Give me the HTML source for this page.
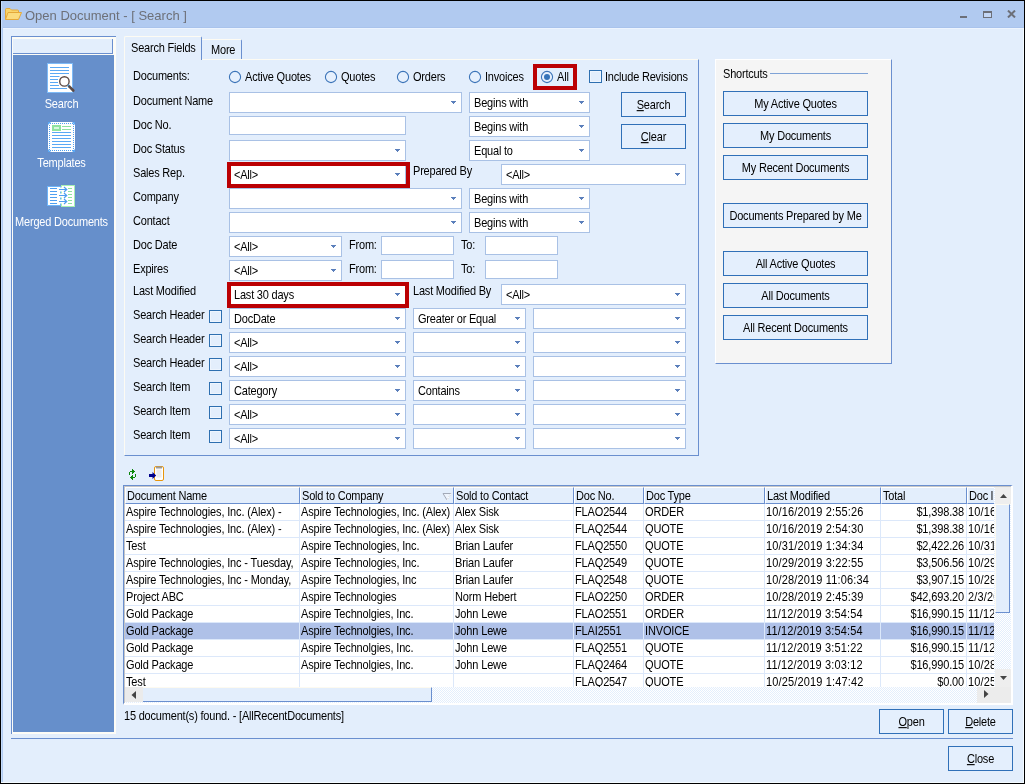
<!DOCTYPE html><html><head><meta charset="utf-8"><title>Open Document</title><style>
*{box-sizing:border-box;margin:0;padding:0}
html,body{width:1025px;height:784px;overflow:hidden}
body{background:#000;font-family:"Liberation Sans",sans-serif;font-size:11px;color:#000;position:relative;letter-spacing:-0.2px}
.g{letter-spacing:-0.15px}
.gd{letter-spacing:0.15px}
#root{position:absolute;left:0;top:0;width:1025px;height:784px;will-change:transform}
.a{position:absolute}
#win{left:1px;top:1px;width:1023px;height:782px;background:#e3eefc}
#title{left:1px;top:1px;width:1023px;height:27px;background:#b1caf0}
.t{position:absolute;white-space:nowrap;line-height:13px;height:13px;font-size:11px;transform:scaleY(1.12);transform-origin:0 10.3px}
.cb{position:absolute;height:21px;background:#fff;border:1px solid #a9c1e5}
.cb span{position:absolute;left:4px;top:4px;line-height:13px;height:13px;white-space:nowrap;transform:scaleY(1.12);transform-origin:0 10.3px}
.cb i{position:absolute;right:5px;top:8px;width:5px;height:1px;background:#5b7fbb}
.cb i:before{content:'';position:absolute;left:1px;top:1px;width:3px;height:1px;background:#5b7fbb}
.cb i:after{content:'';position:absolute;left:2px;top:2px;width:1px;height:1px;background:#5b7fbb}
.tx{position:absolute;height:19px;background:#fff;border:1px solid #a9c1e5}

.btn{position:absolute;border:1px solid #3070b8;background:#e4effd;text-align:center;white-space:nowrap}
.btn span{position:absolute;left:0;right:0;top:6px;line-height:13px;height:13px;text-align:center;transform:scaleY(1.12);transform-origin:50% 10.3px}
.ck{position:absolute;width:13px;height:13px;border:1px solid #2e6fb0;background:#e3eefc;box-shadow:inset 0 0 0 1px #eef5fe}
.rd{position:absolute;width:13px;height:13px;border:1px solid #3c74b8;border-radius:50%;background:#eef5fe}
.red{position:absolute;border:4px solid #bb0003}
u{text-decoration:underline}
</style></head><body><div id="root">
<div id="win" class="a"></div><div id="title" class="a"></div>
<div class="a" style="left:1px;top:1px;width:1px;height:782px;background:#c5dcfb"></div>
<div class="a" style="left:2px;top:28px;width:1px;height:754px;background:#b1caf0"></div>
<div class="a" style="left:1023px;top:28px;width:1px;height:755px;background:#f4fbff"></div>
<div class="a" style="left:1px;top:782px;width:1023px;height:1px;background:#f4fbff"></div>
<div class="a" style="left:3px;top:27px;width:1020px;height:1px;background:#a9c3ec"></div>
<div class="a" style="left:3px;top:28px;width:1020px;height:1px;background:#edf4fe"></div>
<svg class="a" style="left:4px;top:7px" width="19" height="14" viewBox="0 0 19 14">
<path d="M1.5 12.5 V2.5 Q1.5 1.5 2.5 1.5 H6 L7.5 3 H13.5 Q14.5 3 14.5 4 V5" fill="#f9d56b" stroke="#e5a93a" stroke-width="1"/>
<path d="M1.5 12.5 L4 5.5 H17.5 L14.5 12.5 Z" fill="#fbdc7e" stroke="#e5a93a" stroke-width="1" stroke-linejoin="round"/>
</svg>
<div class="t" style="left:25px;top:8px;font-size:13px;line-height:16px;height:16px;color:#6d7078;letter-spacing:0;transform:none">Open Document - [ Search ]</div>
<div class="a" style="left:960px;top:16px;width:7px;height:2px;background:#6c6f78"></div>
<div class="a" style="left:983px;top:11px;width:9px;height:7px;border:1px solid #6c6f78;border-top-width:2px;background:#c3d6f4"></div>
<svg class="a" style="left:1007px;top:10px" width="9" height="8" viewBox="0 0 9 8"><path d="M1 0.6 L8 7.4 M8 0.6 L1 7.4" stroke="#6c6f78" stroke-width="2.1"/></svg>
<div class="a" style="left:11px;top:36px;width:105px;height:698px;background:#fdfcf6;border-left:1px solid #6a8fcf;border-top:1px solid #6a8fcf"></div>
<div class="a" style="left:13px;top:39px;width:100px;height:15px;background:#e3eefc;border-right:1px solid #6a8fcf;border-bottom:1px solid #6a8fcf"></div>
<div class="a" style="left:13px;top:55px;width:101px;height:677px;background:#668fcb"></div>
<svg class="a" style="left:46px;top:62px" width="32" height="32" viewBox="0 0 32 32">
<rect x="1.5" y="1.5" width="25" height="29" fill="#fff" stroke="#7dbaf7" stroke-width="1"/>
<g stroke="#5aa9f5" stroke-width="1"><path d="M4 5.5H23M4 8.5H23M4 11.5H23M4 14.5H13.5M4 17.5H12M4 20.5H12M4 23.5H13M4 26.5H21"/></g>
<circle cx="18.4" cy="19.4" r="4.7" fill="#fff" stroke="#5d4b45" stroke-width="1.4"/>
<path d="M22 23.2 L23.6 24.8" stroke="#3b9be8" stroke-width="2.4"/>
<path d="M23.4 24.6 L27.3 28.5" stroke="#5d4b45" stroke-width="2.6" stroke-linecap="round"/>
</svg>
<div class="t" style="left:11px;top:98px;width:101px;text-align:center;color:#fff">Search</div>
<svg class="a" style="left:47px;top:121px" width="30" height="32" viewBox="0 0 30 32">
<rect x="1" y="1" width="27" height="30" fill="#fff"/>
<rect x="2.5" y="2.5" width="24" height="27" fill="none" stroke="#4f9ff0" stroke-width="1" stroke-dasharray="1 1" shape-rendering="crispEdges"/>
<rect x="5" y="4" width="9" height="6" fill="#8fe39f"/>
<rect x="7" y="6" width="5" height="2" fill="#d9f7de"/>
<path d="M15 5.5H24M15 8.5H24" stroke="#8fe39f"/>
<g stroke="#5aa9f5" stroke-width="1"><path d="M5 11.5H24M5 14.5H24M5 17.5H24M5 20.5H24M5 23.5H24M5 26.5H24"/></g>
<path d="M1 1H4L1 4Z M28 1V4L25 1Z M1 31V28L4 31Z M28 31H25L28 28Z" fill="#5aa9f5"/>
</svg>
<div class="t" style="left:11px;top:157px;width:101px;text-align:center;color:#fff">Templates</div>
<svg class="a" style="left:47px;top:184px" width="30" height="24" viewBox="0 0 30 24">
<rect x="0.5" y="2.5" width="13" height="19" fill="#fff" stroke="#6db3f8"/>
<rect x="14.5" y="1.5" width="13" height="21" fill="#fff" stroke="#a8f0b4"/>
<g stroke="#4f9ff0" stroke-width="1"><path d="M3 4.5H10M3 7.5H10M3 10.5H10M3 13.5H10M3 16.5H10M3 19.5H10"/></g>
<g stroke="#8fe39f" stroke-width="1"><path d="M21 4.5H25M21 7.5H25M21 10.5H25M21 13.5H25M21 16.5H25M21 19.5H25"/></g>
<rect x="12" y="3.5" width="4" height="4" fill="#fff"/><rect x="12" y="15.5" width="4" height="4" fill="#fff"/><rect x="12" y="9.5" width="4" height="4" fill="#fff"/>
<g stroke="#4f9ff0" stroke-width="1.2" fill="none"><path d="M12 5.5H19.5M17 3l2.7 2.5-2.7 2.5M12 11.5H19.5M17 9l2.7 2.5-2.7 2.5M12 17.5H19.5M17 15l2.7 2.5-2.7 2.5"/></g>
</svg>
<div class="t" style="left:11px;top:216px;width:101px;text-align:center;color:#fff">Merged Documents</div>
<div class="a" style="left:124px;top:59px;width:575px;height:397px;background:#e3eefc;border-left:1px solid #fdfbf3;border-top:1px solid #fdfbf3;border-right:1px solid #6a8fcf;border-bottom:1px solid #6a8fcf"></div>
<div class="a" style="left:124px;top:36px;width:78px;height:24px;background:#e3eefc;border-left:1px solid #fdfbf3;border-top:1px solid #fdfbf3;border-right:1px solid #6a8fcf;border-radius:2px 2px 0 0"></div>
<div class="a" style="left:202px;top:39px;width:40px;height:20px;background:#e3eefc;border-top:1px solid #fdfbf3;border-right:1px solid #6a8fcf;border-radius:0 2px 0 0"></div>
<div class="t" style="left:131px;top:42px;">Search Fields</div>
<div class="t" style="left:211px;top:44px;">More</div>
<div class="t" style="left:133px;top:70px;">Documents:</div>
<div class="t" style="left:133px;top:95px;">Document Name</div>
<div class="t" style="left:133px;top:119px;">Doc No.</div>
<div class="t" style="left:133px;top:143px;">Doc Status</div>
<div class="t" style="left:133px;top:167px;">Sales Rep.</div>
<div class="t" style="left:133px;top:191px;">Company</div>
<div class="t" style="left:133px;top:215px;">Contact</div>
<div class="t" style="left:133px;top:239px;">Doc Date</div>
<div class="t" style="left:133px;top:263px;">Expires</div>
<div class="t" style="left:133px;top:285px;">Last Modified</div>
<div class="t" style="left:133px;top:309px;">Search Header</div>
<div class="t" style="left:133px;top:333px;">Search Header</div>
<div class="t" style="left:133px;top:357px;">Search Header</div>
<div class="t" style="left:133px;top:381px;">Search Item</div>
<div class="t" style="left:133px;top:405px;">Search Item</div>
<div class="t" style="left:133px;top:429px;">Search Item</div>
<svg class="a" style="left:228px;top:70px" width="14" height="14" viewBox="0 0 14 14"><circle cx="7" cy="7" r="5.6" fill="#e6f0fd" stroke="#3c74b8" stroke-width="1.1"/></svg>
<div class="t" style="left:245px;top:71px;">Active Quotes</div>
<svg class="a" style="left:324px;top:70px" width="14" height="14" viewBox="0 0 14 14"><circle cx="7" cy="7" r="5.6" fill="#e6f0fd" stroke="#3c74b8" stroke-width="1.1"/></svg>
<div class="t" style="left:341px;top:71px;">Quotes</div>
<svg class="a" style="left:396px;top:70px" width="14" height="14" viewBox="0 0 14 14"><circle cx="7" cy="7" r="5.6" fill="#e6f0fd" stroke="#3c74b8" stroke-width="1.1"/></svg>
<div class="t" style="left:413px;top:71px;">Orders</div>
<svg class="a" style="left:468px;top:70px" width="14" height="14" viewBox="0 0 14 14"><circle cx="7" cy="7" r="5.6" fill="#e6f0fd" stroke="#3c74b8" stroke-width="1.1"/></svg>
<div class="t" style="left:485px;top:71px;">Invoices</div>
<svg class="a" style="left:540px;top:70px" width="14" height="14" viewBox="0 0 14 14"><circle cx="7" cy="7" r="5.6" fill="#e6f0fd" stroke="#3c74b8" stroke-width="1.1"/><circle cx="7" cy="7" r="3" fill="#3573b9"/></svg>
<div class="t" style="left:557px;top:71px;">All</div>
<div class="red" style="left:533px;top:64px;width:44px;height:26px"></div>
<div class="ck" style="left:589px;top:70px"></div>
<div class="t" style="left:605px;top:71px;">Include Revisions</div>
<div class="cb" style="left:229px;top:92px;width:233px"><span></span><i></i></div>
<div class="cb" style="left:469px;top:92px;width:121px"><span>Begins with</span><i></i></div>
<div class="tx" style="left:229px;top:116px;width:177px;height:19px"></div>
<div class="cb" style="left:469px;top:116px;width:121px"><span>Begins with</span><i></i></div>
<div class="cb" style="left:229px;top:140px;width:177px"><span></span><i></i></div>
<div class="cb" style="left:469px;top:140px;width:121px"><span>Equal to</span><i></i></div>
<div class="cb" style="left:229px;top:164px;width:177px"><span>&lt;All&gt;</span><i></i></div>
<div class="red" style="left:227px;top:162px;width:183px;height:26px"></div>
<div class="t" style="left:413px;top:165px;">Prepared By</div>
<div class="cb" style="left:501px;top:164px;width:185px"><span>&lt;All&gt;</span><i></i></div>
<div class="cb" style="left:229px;top:188px;width:233px"><span></span><i></i></div>
<div class="cb" style="left:469px;top:188px;width:121px"><span>Begins with</span><i></i></div>
<div class="cb" style="left:229px;top:212px;width:233px"><span></span><i></i></div>
<div class="cb" style="left:469px;top:212px;width:121px"><span>Begins with</span><i></i></div>
<div class="cb" style="left:229px;top:236px;width:113px"><span>&lt;All&gt;</span><i></i></div>
<div class="t" style="left:349px;top:239px;">From:</div>
<div class="tx" style="left:381px;top:236px;width:73px;height:19px"></div>
<div class="t" style="left:461px;top:239px;">To:</div>
<div class="tx" style="left:485px;top:236px;width:73px;height:19px"></div>
<div class="cb" style="left:229px;top:260px;width:113px"><span>&lt;All&gt;</span><i></i></div>
<div class="t" style="left:349px;top:263px;">From:</div>
<div class="tx" style="left:381px;top:260px;width:73px;height:19px"></div>
<div class="t" style="left:461px;top:263px;">To:</div>
<div class="tx" style="left:485px;top:260px;width:73px;height:19px"></div>
<div class="cb" style="left:229px;top:284px;width:177px"><span>Last 30 days</span><i></i></div>
<div class="red" style="left:227px;top:282px;width:182px;height:26px"></div>
<div class="t" style="left:413px;top:285px;">Last Modified By</div>
<div class="cb" style="left:501px;top:284px;width:185px"><span>&lt;All&gt;</span><i></i></div>
<div class="ck" style="left:209px;top:310px"></div>
<div class="cb" style="left:229px;top:308px;width:177px"><span>DocDate</span><i></i></div>
<div class="cb" style="left:413px;top:308px;width:113px"><span>Greater or Equal</span><i></i></div>
<div class="cb" style="left:533px;top:308px;width:153px"><span></span><i></i></div>
<div class="ck" style="left:209px;top:334px"></div>
<div class="cb" style="left:229px;top:332px;width:177px"><span>&lt;All&gt;</span><i></i></div>
<div class="cb" style="left:413px;top:332px;width:113px"><span></span><i></i></div>
<div class="cb" style="left:533px;top:332px;width:153px"><span></span><i></i></div>
<div class="ck" style="left:209px;top:358px"></div>
<div class="cb" style="left:229px;top:356px;width:177px"><span>&lt;All&gt;</span><i></i></div>
<div class="cb" style="left:413px;top:356px;width:113px"><span></span><i></i></div>
<div class="cb" style="left:533px;top:356px;width:153px"><span></span><i></i></div>
<div class="ck" style="left:209px;top:382px"></div>
<div class="cb" style="left:229px;top:380px;width:177px"><span>Category</span><i></i></div>
<div class="cb" style="left:413px;top:380px;width:113px"><span>Contains</span><i></i></div>
<div class="cb" style="left:533px;top:380px;width:153px"><span></span><i></i></div>
<div class="ck" style="left:209px;top:406px"></div>
<div class="cb" style="left:229px;top:404px;width:177px"><span>&lt;All&gt;</span><i></i></div>
<div class="cb" style="left:413px;top:404px;width:113px"><span></span><i></i></div>
<div class="cb" style="left:533px;top:404px;width:153px"><span></span><i></i></div>
<div class="ck" style="left:209px;top:430px"></div>
<div class="cb" style="left:229px;top:428px;width:177px"><span>&lt;All&gt;</span><i></i></div>
<div class="cb" style="left:413px;top:428px;width:113px"><span></span><i></i></div>
<div class="cb" style="left:533px;top:428px;width:153px"><span></span><i></i></div>
<div class="btn" style="left:621px;top:92px;width:65px;height:25px"><span><u>S</u>earch</span></div>
<div class="btn" style="left:621px;top:124px;width:65px;height:25px"><span><u>C</u>lear</span></div>
<div class="a" style="left:715px;top:59px;width:177px;height:305px;background:#f5f5f5;border-left:1px solid #fff;border-top:1px solid #fff;border-right:1px solid #6a8fcf;border-bottom:1px solid #6a8fcf"></div>
<div class="t" style="left:723px;top:68px;">Shortcuts</div>
<div class="a" style="left:770px;top:73px;width:98px;height:1px;background:#7fa3d6"></div>
<div class="btn" style="left:723px;top:91px;width:145px;height:25px"><span>My Active Quotes</span></div>
<div class="btn" style="left:723px;top:123px;width:145px;height:25px"><span>My Documents</span></div>
<div class="btn" style="left:723px;top:155px;width:145px;height:25px"><span>My Recent Documents</span></div>
<div class="btn" style="left:723px;top:203px;width:145px;height:25px"><span>Documents Prepared by Me</span></div>
<div class="btn" style="left:723px;top:251px;width:145px;height:25px"><span>All Active Quotes</span></div>
<div class="btn" style="left:723px;top:283px;width:145px;height:25px"><span>All Documents</span></div>
<div class="btn" style="left:723px;top:315px;width:145px;height:25px"><span>All Recent Documents</span></div>
<svg class="a" style="left:128px;top:468px" width="10" height="14" viewBox="0 0 10 14" shape-rendering="crispEdges" fill="#0b860b"><rect x="4" y="1" width="1" height="1"/><rect x="4" y="2" width="1" height="1"/><rect x="5" y="2" width="1" height="1"/><rect x="2" y="3" width="1" height="1"/><rect x="3" y="3" width="1" height="1"/><rect x="4" y="3" width="1" height="1"/><rect x="5" y="3" width="1" height="1"/><rect x="6" y="3" width="1" height="1"/><rect x="1" y="4" width="1" height="1"/><rect x="4" y="4" width="1" height="1"/><rect x="5" y="4" width="1" height="1"/><rect x="1" y="5" width="1" height="1"/><rect x="4" y="5" width="1" height="1"/><rect x="1" y="6" width="1" height="1"/><rect x="7" y="6" width="1" height="1"/><rect x="4" y="7" width="1" height="1"/><rect x="7" y="7" width="1" height="1"/><rect x="3" y="8" width="1" height="1"/><rect x="4" y="8" width="1" height="1"/><rect x="7" y="8" width="1" height="1"/><rect x="2" y="9" width="1" height="1"/><rect x="3" y="9" width="1" height="1"/><rect x="4" y="9" width="1" height="1"/><rect x="5" y="9" width="1" height="1"/><rect x="6" y="9" width="1" height="1"/><rect x="3" y="10" width="1" height="1"/><rect x="4" y="10" width="1" height="1"/><rect x="4" y="11" width="1" height="1"/></svg>
<svg class="a" style="left:148px;top:465px" width="18" height="17" viewBox="0 0 18 17">
<rect x="6.5" y="1.5" width="9" height="14" rx="1.5" fill="#fff" stroke="#e8960c" stroke-width="1"/>
<rect x="8.5" y="4.5" width="5" height="8" fill="#ececec"/>
<rect x="8" y="1.5" width="6" height="2" fill="#9a9a9a"/>
<path d="M1 9 H4.5 V7 L8.2 10.5 L4.5 14 V12 H1 Z" fill="#00008a"/>
</svg>
<div class="a" style="left:123px;top:485px;width:890px;height:220px;border-left:1px solid #6a8fcf;border-top:1px solid #6a8fcf;border-right:2px solid #fff;border-bottom:2px solid #fff;background:#fff"></div>
<div class="a" style="left:124px;top:486px;width:887px;height:217px;border-left:1px solid #c6c6c6;border-top:1px solid #c6c6c6;background:#fff"></div>
<div class="a" style="left:125px;top:487px;width:175px;height:17px;background:#e3eefc;border-left:1px solid #fff;border-top:1px solid #fff;border-right:1px solid #6a8fcf;border-bottom:1px solid #6a8fcf"></div>
<div class="t" style="left:127px;top:490px;width:171px;overflow:hidden">Document Name</div>
<div class="a" style="left:300px;top:487px;width:154px;height:17px;background:#e3eefc;border-left:1px solid #fff;border-top:1px solid #fff;border-right:1px solid #6a8fcf;border-bottom:1px solid #6a8fcf"></div>
<div class="t" style="left:302px;top:490px;width:150px;overflow:hidden">Sold to Company</div>
<div class="a" style="left:454px;top:487px;width:120px;height:17px;background:#e3eefc;border-left:1px solid #fff;border-top:1px solid #fff;border-right:1px solid #6a8fcf;border-bottom:1px solid #6a8fcf"></div>
<div class="t" style="left:456px;top:490px;width:116px;overflow:hidden">Sold to Contact</div>
<div class="a" style="left:574px;top:487px;width:70px;height:17px;background:#e3eefc;border-left:1px solid #fff;border-top:1px solid #fff;border-right:1px solid #6a8fcf;border-bottom:1px solid #6a8fcf"></div>
<div class="t" style="left:576px;top:490px;width:66px;overflow:hidden">Doc No.</div>
<div class="a" style="left:644px;top:487px;width:121px;height:17px;background:#e3eefc;border-left:1px solid #fff;border-top:1px solid #fff;border-right:1px solid #6a8fcf;border-bottom:1px solid #6a8fcf"></div>
<div class="t" style="left:646px;top:490px;width:117px;overflow:hidden">Doc Type</div>
<div class="a" style="left:765px;top:487px;width:116px;height:17px;background:#e3eefc;border-left:1px solid #fff;border-top:1px solid #fff;border-right:1px solid #6a8fcf;border-bottom:1px solid #6a8fcf"></div>
<div class="t" style="left:767px;top:490px;width:112px;overflow:hidden">Last Modified</div>
<div class="a" style="left:881px;top:487px;width:86px;height:17px;background:#e3eefc;border-left:1px solid #fff;border-top:1px solid #fff;border-right:1px solid #6a8fcf;border-bottom:1px solid #6a8fcf"></div>
<div class="t" style="left:883px;top:490px;width:82px;overflow:hidden">Total</div>
<div class="a" style="left:967px;top:487px;width:28px;height:17px;background:#e3eefc;border-left:1px solid #fff;border-top:1px solid #fff;border-bottom:1px solid #6a8fcf"></div>
<div class="t" style="left:969px;top:490px;width:24px;overflow:hidden">Doc l</div>
<svg class="a" style="left:442px;top:492px" width="10" height="9" viewBox="0 0 10 9"><path d="M1 1.5 H9 L5 8 Z" fill="#eef4fd" stroke="#a3aab8" stroke-width="1"/><path d="M9 1.5 L5 8" stroke="#fff" stroke-width="1"/></svg>
<div class="a" style="left:125px;top:504px;width:870px;height:17px;background:#fff;border-bottom:1px solid #dce8fa"></div>
<div class="t g" style="left:126px;top:506px;width:173px;overflow:hidden;">Aspire Technologies, Inc. (Alex) -</div>
<div class="t g" style="left:301px;top:506px;width:152px;overflow:hidden;">Aspire Technologies, Inc. (Alex)</div>
<div class="t g" style="left:455px;top:506px;width:118px;overflow:hidden;">Alex Sisk</div>
<div class="t g" style="left:575px;top:506px;width:68px;overflow:hidden;">FLAO2544</div>
<div class="t g" style="left:645px;top:506px;width:119px;overflow:hidden;">ORDER</div>
<div class="t gd" style="left:766px;top:506px;width:114px;overflow:hidden;">10/16/2019 2:55:26</div>
<div class="t g" style="left:882px;top:506px;width:82px;overflow:hidden;text-align:right;">$1,398.38</div>
<div class="t gd" style="left:968px;top:506px;width:26px;overflow:hidden;">10/16/2019</div>
<div class="a" style="left:125px;top:521px;width:870px;height:17px;background:#fff;border-bottom:1px solid #dce8fa"></div>
<div class="t g" style="left:126px;top:523px;width:173px;overflow:hidden;">Aspire Technologies, Inc. (Alex) -</div>
<div class="t g" style="left:301px;top:523px;width:152px;overflow:hidden;">Aspire Technologies, Inc. (Alex)</div>
<div class="t g" style="left:455px;top:523px;width:118px;overflow:hidden;">Alex Sisk</div>
<div class="t g" style="left:575px;top:523px;width:68px;overflow:hidden;">FLAQ2544</div>
<div class="t g" style="left:645px;top:523px;width:119px;overflow:hidden;">QUOTE</div>
<div class="t gd" style="left:766px;top:523px;width:114px;overflow:hidden;">10/16/2019 2:54:30</div>
<div class="t g" style="left:882px;top:523px;width:82px;overflow:hidden;text-align:right;">$1,398.38</div>
<div class="t gd" style="left:968px;top:523px;width:26px;overflow:hidden;">10/16/2019</div>
<div class="a" style="left:125px;top:538px;width:870px;height:17px;background:#fff;border-bottom:1px solid #dce8fa"></div>
<div class="t g" style="left:126px;top:540px;width:173px;overflow:hidden;">Test</div>
<div class="t g" style="left:301px;top:540px;width:152px;overflow:hidden;">Aspire Technologies, Inc.</div>
<div class="t g" style="left:455px;top:540px;width:118px;overflow:hidden;">Brian Laufer</div>
<div class="t g" style="left:575px;top:540px;width:68px;overflow:hidden;">FLAQ2550</div>
<div class="t g" style="left:645px;top:540px;width:119px;overflow:hidden;">QUOTE</div>
<div class="t gd" style="left:766px;top:540px;width:114px;overflow:hidden;">10/31/2019 1:34:34</div>
<div class="t g" style="left:882px;top:540px;width:82px;overflow:hidden;text-align:right;">$2,422.26</div>
<div class="t gd" style="left:968px;top:540px;width:26px;overflow:hidden;">10/31/2019</div>
<div class="a" style="left:125px;top:555px;width:870px;height:17px;background:#fff;border-bottom:1px solid #dce8fa"></div>
<div class="t g" style="left:126px;top:557px;width:173px;overflow:hidden;">Aspire Technologies, Inc - Tuesday,</div>
<div class="t g" style="left:301px;top:557px;width:152px;overflow:hidden;">Aspire Technologies, Inc.</div>
<div class="t g" style="left:455px;top:557px;width:118px;overflow:hidden;">Brian Laufer</div>
<div class="t g" style="left:575px;top:557px;width:68px;overflow:hidden;">FLAQ2549</div>
<div class="t g" style="left:645px;top:557px;width:119px;overflow:hidden;">QUOTE</div>
<div class="t gd" style="left:766px;top:557px;width:114px;overflow:hidden;">10/29/2019 3:22:55</div>
<div class="t g" style="left:882px;top:557px;width:82px;overflow:hidden;text-align:right;">$3,506.56</div>
<div class="t gd" style="left:968px;top:557px;width:26px;overflow:hidden;">10/29/2019</div>
<div class="a" style="left:125px;top:572px;width:870px;height:17px;background:#fff;border-bottom:1px solid #dce8fa"></div>
<div class="t g" style="left:126px;top:574px;width:173px;overflow:hidden;">Aspire Technologies, Inc - Monday,</div>
<div class="t g" style="left:301px;top:574px;width:152px;overflow:hidden;">Aspire Technologies, Inc</div>
<div class="t g" style="left:455px;top:574px;width:118px;overflow:hidden;">Brian Laufer</div>
<div class="t g" style="left:575px;top:574px;width:68px;overflow:hidden;">FLAQ2548</div>
<div class="t g" style="left:645px;top:574px;width:119px;overflow:hidden;">QUOTE</div>
<div class="t gd" style="left:766px;top:574px;width:114px;overflow:hidden;">10/28/2019 11:06:34</div>
<div class="t g" style="left:882px;top:574px;width:82px;overflow:hidden;text-align:right;">$3,907.15</div>
<div class="t gd" style="left:968px;top:574px;width:26px;overflow:hidden;">10/28/2019</div>
<div class="a" style="left:125px;top:589px;width:870px;height:17px;background:#fff;border-bottom:1px solid #dce8fa"></div>
<div class="t g" style="left:126px;top:591px;width:173px;overflow:hidden;">Project ABC</div>
<div class="t g" style="left:301px;top:591px;width:152px;overflow:hidden;">Aspire Technologies</div>
<div class="t g" style="left:455px;top:591px;width:118px;overflow:hidden;">Norm Hebert</div>
<div class="t g" style="left:575px;top:591px;width:68px;overflow:hidden;">FLAO2250</div>
<div class="t g" style="left:645px;top:591px;width:119px;overflow:hidden;">ORDER</div>
<div class="t gd" style="left:766px;top:591px;width:114px;overflow:hidden;">10/28/2019 2:45:39</div>
<div class="t g" style="left:882px;top:591px;width:82px;overflow:hidden;text-align:right;">$42,693.20</div>
<div class="t gd" style="left:968px;top:591px;width:26px;overflow:hidden;">2/3/2019</div>
<div class="a" style="left:125px;top:606px;width:870px;height:17px;background:#fff;border-bottom:1px solid #dce8fa"></div>
<div class="t g" style="left:126px;top:608px;width:173px;overflow:hidden;">Gold Package</div>
<div class="t g" style="left:301px;top:608px;width:152px;overflow:hidden;">Aspire Technolgies, Inc.</div>
<div class="t g" style="left:455px;top:608px;width:118px;overflow:hidden;">John Lewe</div>
<div class="t g" style="left:575px;top:608px;width:68px;overflow:hidden;">FLAO2551</div>
<div class="t g" style="left:645px;top:608px;width:119px;overflow:hidden;">ORDER</div>
<div class="t gd" style="left:766px;top:608px;width:114px;overflow:hidden;">11/12/2019 3:54:54</div>
<div class="t g" style="left:882px;top:608px;width:82px;overflow:hidden;text-align:right;">$16,990.15</div>
<div class="t gd" style="left:968px;top:608px;width:26px;overflow:hidden;">11/12/2019</div>
<div class="a" style="left:125px;top:623px;width:870px;height:17px;background:#afc1e8;border-bottom:1px solid #dce8fa"></div>
<div class="t g" style="left:126px;top:625px;width:173px;overflow:hidden;">Gold Package</div>
<div class="t g" style="left:301px;top:625px;width:152px;overflow:hidden;">Aspire Technolgies, Inc.</div>
<div class="t g" style="left:455px;top:625px;width:118px;overflow:hidden;">John Lewe</div>
<div class="t g" style="left:575px;top:625px;width:68px;overflow:hidden;">FLAI2551</div>
<div class="t g" style="left:645px;top:625px;width:119px;overflow:hidden;">INVOICE</div>
<div class="t gd" style="left:766px;top:625px;width:114px;overflow:hidden;">11/12/2019 3:54:54</div>
<div class="t g" style="left:882px;top:625px;width:82px;overflow:hidden;text-align:right;">$16,990.15</div>
<div class="t gd" style="left:968px;top:625px;width:26px;overflow:hidden;">11/12/2019</div>
<div class="a" style="left:125px;top:640px;width:870px;height:17px;background:#fff;border-bottom:1px solid #dce8fa"></div>
<div class="t g" style="left:126px;top:642px;width:173px;overflow:hidden;">Gold Package</div>
<div class="t g" style="left:301px;top:642px;width:152px;overflow:hidden;">Aspire Technolgies, Inc.</div>
<div class="t g" style="left:455px;top:642px;width:118px;overflow:hidden;">John Lewe</div>
<div class="t g" style="left:575px;top:642px;width:68px;overflow:hidden;">FLAQ2551</div>
<div class="t g" style="left:645px;top:642px;width:119px;overflow:hidden;">QUOTE</div>
<div class="t gd" style="left:766px;top:642px;width:114px;overflow:hidden;">11/12/2019 3:51:22</div>
<div class="t g" style="left:882px;top:642px;width:82px;overflow:hidden;text-align:right;">$16,990.15</div>
<div class="t gd" style="left:968px;top:642px;width:26px;overflow:hidden;">11/12/2019</div>
<div class="a" style="left:125px;top:657px;width:870px;height:17px;background:#fff;border-bottom:1px solid #dce8fa"></div>
<div class="t g" style="left:126px;top:659px;width:173px;overflow:hidden;">Gold Package</div>
<div class="t g" style="left:301px;top:659px;width:152px;overflow:hidden;">Aspire Technolgies, Inc.</div>
<div class="t g" style="left:455px;top:659px;width:118px;overflow:hidden;">John Lewe</div>
<div class="t g" style="left:575px;top:659px;width:68px;overflow:hidden;">FLAQ2464</div>
<div class="t g" style="left:645px;top:659px;width:119px;overflow:hidden;">QUOTE</div>
<div class="t gd" style="left:766px;top:659px;width:114px;overflow:hidden;">11/12/2019 3:03:12</div>
<div class="t g" style="left:882px;top:659px;width:82px;overflow:hidden;text-align:right;">$16,990.15</div>
<div class="t gd" style="left:968px;top:659px;width:26px;overflow:hidden;">10/28/2019</div>
<div class="a" style="left:125px;top:674px;width:870px;height:13px;background:#fff;"></div>
<div class="t g" style="left:126px;top:676px;width:173px;overflow:hidden;">Test</div>
<div class="t g" style="left:301px;top:676px;width:152px;overflow:hidden;"></div>
<div class="t g" style="left:455px;top:676px;width:118px;overflow:hidden;"></div>
<div class="t g" style="left:575px;top:676px;width:68px;overflow:hidden;">FLAQ2547</div>
<div class="t g" style="left:645px;top:676px;width:119px;overflow:hidden;">QUOTE</div>
<div class="t gd" style="left:766px;top:676px;width:114px;overflow:hidden;">10/25/2019 1:47:42</div>
<div class="t g" style="left:882px;top:676px;width:82px;overflow:hidden;text-align:right;">$0.00</div>
<div class="t gd" style="left:968px;top:676px;width:26px;overflow:hidden;">10/25/2019</div>
<div class="a" style="left:299px;top:504px;width:1px;height:183px;background:#dce8fa"></div>
<div class="a" style="left:453px;top:504px;width:1px;height:183px;background:#dce8fa"></div>
<div class="a" style="left:573px;top:504px;width:1px;height:183px;background:#dce8fa"></div>
<div class="a" style="left:643px;top:504px;width:1px;height:183px;background:#dce8fa"></div>
<div class="a" style="left:764px;top:504px;width:1px;height:183px;background:#dce8fa"></div>
<div class="a" style="left:880px;top:504px;width:1px;height:183px;background:#dce8fa"></div>
<div class="a" style="left:966px;top:504px;width:1px;height:183px;background:#dce8fa"></div>
<div class="a" style="left:994px;top:487px;width:17px;height:200px;background:repeating-conic-gradient(#fff 0% 25%, #e3eefc 0% 50%) 0 0/2px 2px"></div>
<div class="a" style="left:995px;top:487px;width:16px;height:17px;background:#eeeeee"></div>
<svg class="a" style="left:1000px;top:494px" width="7" height="4" viewBox="0 0 7 4"><path d="M0 4 L3.5 0 L7 4Z" fill="#444"/></svg>
<div class="a" style="left:995px;top:504px;width:15px;height:109px;background:#e3eefc;border-right:1px solid #6a8fcf;border-bottom:1px solid #6a8fcf;border-left:1px solid #fdfaf0;border-top:1px solid #fdfaf0"></div>
<div class="a" style="left:995px;top:669px;width:16px;height:18px;background:#eeeeee"></div>
<svg class="a" style="left:1000px;top:676px" width="7" height="4" viewBox="0 0 7 4"><path d="M0 0 L7 0 L3.5 4Z" fill="#444"/></svg>
<div class="a" style="left:125px;top:687px;width:886px;height:16px;background:repeating-conic-gradient(#fff 0% 25%, #e3eefc 0% 50%) 0 0/2px 2px"></div>
<div class="a" style="left:125px;top:687px;width:18px;height:15px;background:#ebebeb"></div>
<svg class="a" style="left:131px;top:691px" width="5" height="8" viewBox="0 0 5 8"><path d="M5 0 L5 8 L0.5 4Z" fill="#444"/></svg>
<div class="a" style="left:143px;top:687px;width:289px;height:15px;background:#e3eefc;border-right:1px solid #6a8fcf;border-bottom:1px solid #6a8fcf;border-top:1px solid #fdfaf0"></div>
<div class="a" style="left:977px;top:687px;width:34px;height:16px;background:#ececec"></div>
<svg class="a" style="left:984px;top:690px" width="5" height="8" viewBox="0 0 5 8"><path d="M0 0 L0 8 L4.5 4Z" fill="#444"/></svg>
<div class="t" style="left:124px;top:710px;">15 document(s) found. - [AllRecentDocuments]</div>
<div class="btn" style="left:879px;top:709px;width:65px;height:25px"><span><u>O</u>pen</span></div>
<div class="btn" style="left:948px;top:709px;width:65px;height:25px"><span><u>D</u>elete</span></div>
<div class="a" style="left:11px;top:738px;width:1002px;height:1px;background:#6a8fcf"></div>
<div class="btn" style="left:948px;top:746px;width:65px;height:25px"><span><u>C</u>lose</span></div>
</div></body></html>
